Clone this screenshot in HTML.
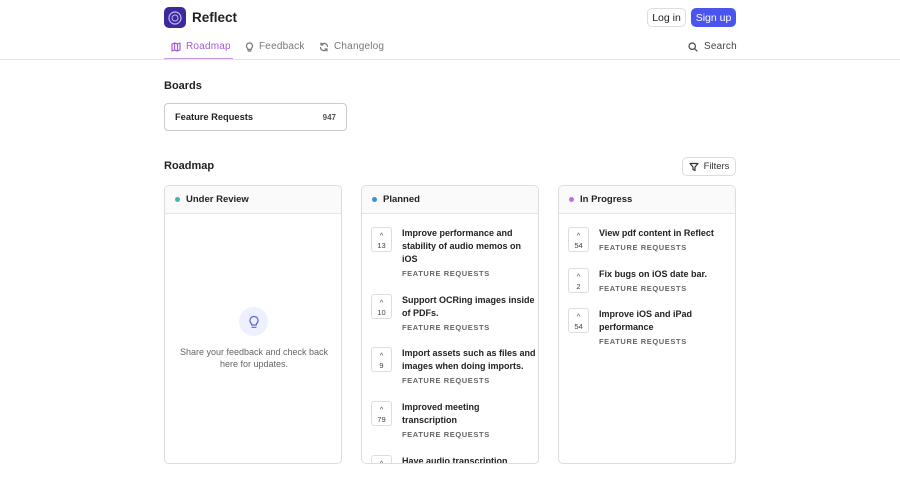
<!DOCTYPE html>
<html><head><meta charset="utf-8"><style>
*{box-sizing:border-box;margin:0;padding:0}
body{width:900px;height:484px;overflow:hidden;background:#fff;font-family:"Liberation Sans",sans-serif;color:#222;position:relative}
.a{position:absolute}
.logo{left:164px;top:7px;width:22px;height:21px;border-radius:5px;background:#3b2a9a;display:flex;align-items:center;justify-content:center}
.nav{font-size:10px;color:#777;top:41px;letter-spacing:.2px;display:flex;align-items:center;gap:5px}
.btn{font-size:10.5px;height:19px;border-radius:5px;display:flex;align-items:center;justify-content:center}
.col{top:185px;width:178px;height:279px;border:1px solid #ddd;border-radius:5px;overflow:hidden}
.colh{height:28px;border-bottom:1px solid #e5e5e5;background:#fafafa;display:flex;align-items:center;padding-left:10px;font-size:9.5px;font-weight:bold}
.dot{width:5px;height:5px;border-radius:50%;margin-right:6px}
.it{position:absolute;left:9px;width:165px}
.vb{position:absolute;left:0;top:0;width:21px;height:25px;border:1px solid #ddd;border-radius:3px;font-size:7.5px;color:#444;text-align:center;padding-top:3px;line-height:10px}
.t{margin-left:31px;font-size:9px;font-weight:bold;line-height:13px;color:#222}
.s{margin-left:31px;font-size:7.5px;font-weight:bold;color:#666;letter-spacing:.6px;margin-top:3px}
svg.i{fill:none;stroke:currentColor;stroke-width:1.2;stroke-linecap:round;stroke-linejoin:round}
</style></head><body>
<div class="a logo"><svg width="16" height="16" viewBox="0 0 16 16"><circle cx="8" cy="8" r="6" fill="none" stroke="#c9b8ff" stroke-width="1.2"/><circle cx="8" cy="8" r="3" fill="none" stroke="#c9b8ff" stroke-width="1"/></svg></div>
<div class="a" style="left:192px;top:10px;font-size:13.5px;font-weight:bold">Reflect</div>
<div class="a btn" style="left:647px;top:8px;width:39px;border:1px solid #ddd;color:#222">Log in</div>
<div class="a btn" style="left:691px;top:8px;width:45px;background:#4a55ee;color:#fff">Sign up</div>
<div class="a nav" style="left:171px;color:#a35bd6"><svg class="i" width="10" height="10" viewBox="0 0 10 10"><path d="M1 2l2.5-1 3 1 2.5-1v7l-2.5 1-3-1L1 9z M3.5 1v7 M6.5 2v7"/></svg>Roadmap</div>
<div class="a" style="left:164px;top:58px;width:69px;height:2px;background:#c99be6"></div>
<div class="a nav" style="left:245px"><svg class="i" width="9" height="10" viewBox="0 0 9 10"><path d="M4.5 1a3 3 0 0 0-1.8 5.4V7.5h3.6V6.4A3 3 0 0 0 4.5 1z M3.2 9h2.6"/></svg>Feedback</div>
<div class="a nav" style="left:319px"><svg class="i" width="10" height="10" viewBox="0 0 10 10"><path d="M8.5 4.5A3.5 3.5 0 0 0 2.2 2.8M1.5 5.5a3.5 3.5 0 0 0 6.3 1.7M2 1v2h2M8 9V7H6"/></svg>Changelog</div>
<div class="a nav" style="left:688px;color:#444;gap:6px"><svg class="i" width="10" height="10" viewBox="0 0 10 10"><circle cx="4.2" cy="4.2" r="3.2"/><path d="M6.6 6.6L9 9"/></svg>Search</div>
<div class="a" style="left:0;top:59px;width:900px;height:1px;background:#e5e5e5"></div>
<div class="a" style="left:164px;top:80px;font-size:11px;font-weight:bold">Boards</div>
<div class="a" style="left:164px;top:103px;width:183px;height:28px;border:1px solid #ccc;border-radius:4px;font-size:9.3px;font-weight:bold;display:flex;align-items:center;justify-content:space-between;padding:0 10px"><span>Feature Requests</span><span style="font-size:8px;color:#555">947</span></div>
<div class="a" style="left:164px;top:160px;font-size:11px;font-weight:bold">Roadmap</div>
<div class="a btn" style="left:682px;top:157px;width:54px;height:19px;border:1px solid #ddd;color:#333;font-size:9.5px;gap:5px"><svg class="i" width="10" height="10" viewBox="0 0 10 10"><path d="M1 1.5h8L6 5v3.5L4 7.5V5z"/></svg>Filters</div>

<div class="a col" style="left:164px"><div class="colh"><span class="dot" style="background:#3bb8b0"></span>Under Review</div>
<div class="a" style="left:74px;top:121px;width:29px;height:29px;border-radius:50%;background:#eef0ff;display:flex;align-items:center;justify-content:center;color:#5a64e0"><svg class="i" width="12" height="14" viewBox="0 0 12 14"><path d="M6 1.5a4 4 0 0 0-2.4 7.2V10h4.8V8.7A4 4 0 0 0 6 1.5z M4 12.3h4"/></svg></div>
<div class="a" style="left:0;top:160px;width:178px;text-align:center;font-size:9px;color:#666;line-height:12px">Share your feedback and check back<br>here for updates.</div></div>

<div class="a col" style="left:361px"><div class="colh"><span class="dot" style="background:#3b8de8"></span>Planned</div>
<div class="it" style="top:41px"><div class="vb">^<br>13</div><div class="t">Improve performance and<br>stability of audio memos on<br>iOS</div><div class="s">FEATURE REQUESTS</div></div>
<div class="it" style="top:108px"><div class="vb">^<br>10</div><div class="t">Support OCRing images inside<br>of PDFs.</div><div class="s">FEATURE REQUESTS</div></div>
<div class="it" style="top:161px"><div class="vb">^<br>9</div><div class="t">Import assets such as files and<br>images when doing imports.</div><div class="s">FEATURE REQUESTS</div></div>
<div class="it" style="top:215px"><div class="vb">^<br>79</div><div class="t">Improved meeting<br>transcription</div><div class="s">FEATURE REQUESTS</div></div>
<div class="it" style="top:269px"><div class="vb">^</div><div class="t">Have audio transcription</div></div></div>

<div class="a col" style="left:558px"><div class="colh"><span class="dot" style="background:#c76ae0"></span>In Progress</div>
<div class="it" style="top:41px"><div class="vb">^<br>54</div><div class="t">View pdf content in Reflect</div><div class="s">FEATURE REQUESTS</div></div>
<div class="it" style="top:82px"><div class="vb">^<br>2</div><div class="t">Fix bugs on iOS date bar.</div><div class="s">FEATURE REQUESTS</div></div>
<div class="it" style="top:122px"><div class="vb">^<br>54</div><div class="t">Improve iOS and iPad<br>performance</div><div class="s">FEATURE REQUESTS</div></div></div>
</body></html>
